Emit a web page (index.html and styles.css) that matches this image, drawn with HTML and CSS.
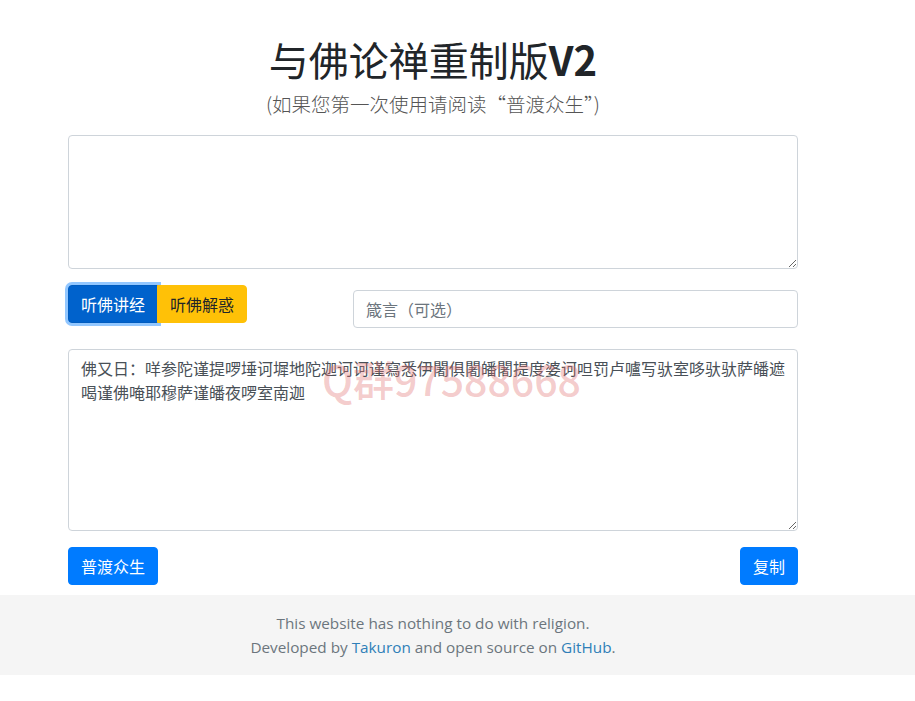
FILE: index.html
```html
<!DOCTYPE html>
<html lang="zh-CN">
<head>
<meta charset="utf-8">
<title>与佛论禅重制版V2</title>
<link rel="stylesheet" href="styles.css">
</head>
<body>
<main class="container">
  <header class="header">
    <h1 class="title">与佛论禅重制版<span class="ver">V2</span></h1>
    <p class="subtitle">(如果您第一次使用请阅读“普渡众生”)</p>
  </header>
  <textarea class="form-control input-area" rows="5"></textarea>
  <div class="controls">
    <div class="btn-group">
      <button class="btn btn-primary active">听佛讲经</button>
      <button class="btn btn-warning">听佛解惑</button>
    </div>
    <input class="form-control key-input" type="text" placeholder="箴言（可选）">
  </div>
  <div class="output-wrap">
    <textarea class="form-control output-area" rows="7">佛又日：咩参陀谨提啰埵诃墀地陀迦诃诃谨寫悉伊闍俱闍皤闍提度婆诃呾罚卢嚧写驮室哆驮驮萨皤遮
喝谨佛唵耶穆萨谨皤夜啰室南迦</textarea>
    <div class="watermark">Q群97588668</div>
  </div>
  <div class="actions">
    <button class="btn btn-blue">普渡众生</button>
    <button class="btn btn-blue">复制</button>
  </div>
</main>
<footer class="footer">
  <div class="footer-inner">
    <p>This website has nothing to do with religion.</p>
    <p>Developed by <a href="#">Takuron</a> and open source on <a href="#">GitHub</a>.</p>
  </div>
</footer>
</body>
</html>
```
FILE: styles.css
```css
* { box-sizing: border-box; }
html, body { margin: 0; padding: 0; background: #fff; }
body {
  font-family: "Noto Sans CJK SC", "Noto Sans", sans-serif;
  color: #212529;
  font-size: 16px;
  line-height: 1.5;
}
.container {
  width: 730px;
  margin: 0 0 0 68px;
  padding-top: 35px;
}
.header { text-align: center; }
.title {
  margin: 0;
  font-size: 40px;
  font-weight: 400;
  line-height: 48px;
  color: #212529;
}
.title .ver { font-weight: 700; }
.subtitle {
  margin: 6px 0 0;
  font-size: 19.5px;
  font-weight: 300;
  line-height: 30px;
  color: #555;
}
.form-control {
  display: block;
  width: 100%;
  font-family: "Noto Sans CJK SC", sans-serif;
  font-size: 16px;
  line-height: 24px;
  color: #495057;
  background: #fff;
  border: 1px solid #ced4da;
  border-radius: 4px;
  padding: 6px 12px;
  outline: none;
}
.form-control::placeholder { color: #6c757d; }
.input-area {
  margin-top: 16px;
  height: 134px;
  resize: vertical;
}
.controls {
  display: flex;
  align-items: flex-start;
  margin-top: 16px;
}
.btn-group { display: flex; }
.btn {
  font-family: "Noto Sans CJK SC", sans-serif;
  font-size: 16px;
  line-height: 24px;
  padding: 6px 12px;
  border: 1px solid transparent;
  border-radius: 4px;
  cursor: pointer;
}
.btn-group .btn:first-child { border-top-right-radius: 0; border-bottom-right-radius: 0; }
.btn-group .btn:last-child { border-top-left-radius: 0; border-bottom-left-radius: 0; margin-left: -1px; }
.btn-primary { background: #007bff; border-color: #007bff; color: #fff; }
.btn-primary.active {
  background: #0062cc;
  border-color: #005cbf;
  box-shadow: 0 0 0 3px rgba(38, 143, 255, 0.5);
  position: relative;
  z-index: 0;
}
.btn-warning { background: #ffc107; border-color: #ffc107; color: #212529; position: relative; z-index: 1; }
.key-input {
  width: 445px;
  height: 38px;
  margin-left: auto;
  margin-top: 5px;
}
.output-wrap {
  position: relative;
  margin-top: 21px;
}
.output-area {
  height: 182px;
  resize: vertical;
  padding-right: 11px;
}
.watermark {
  position: absolute;
  left: 254px;
  top: 3px;
  font-family: "Noto Sans CJK SC", sans-serif;
  font-size: 41px;
  font-weight: 500;
  line-height: 52px;
  color: rgba(225, 110, 110, 0.36);
  pointer-events: none;
}
.actions {
  display: flex;
  justify-content: space-between;
  margin-top: 16px;
  margin-bottom: 10px;
}
.btn-blue { background: #007bff; border-color: #007bff; color: #fff; }
.footer {
  background: #f5f5f5;
  padding: 16px 0;
  color: #6c757d;
  font-family: "Open Sans", "Noto Sans", sans-serif;
  font-size: 15.3px;
  line-height: 24px;
}
.footer-inner {
  width: 730px;
  margin-left: 68px;
  text-align: center;
}
.footer p { margin: 0; }
.footer a { color: #2f7fb8; text-decoration: none; }
```
